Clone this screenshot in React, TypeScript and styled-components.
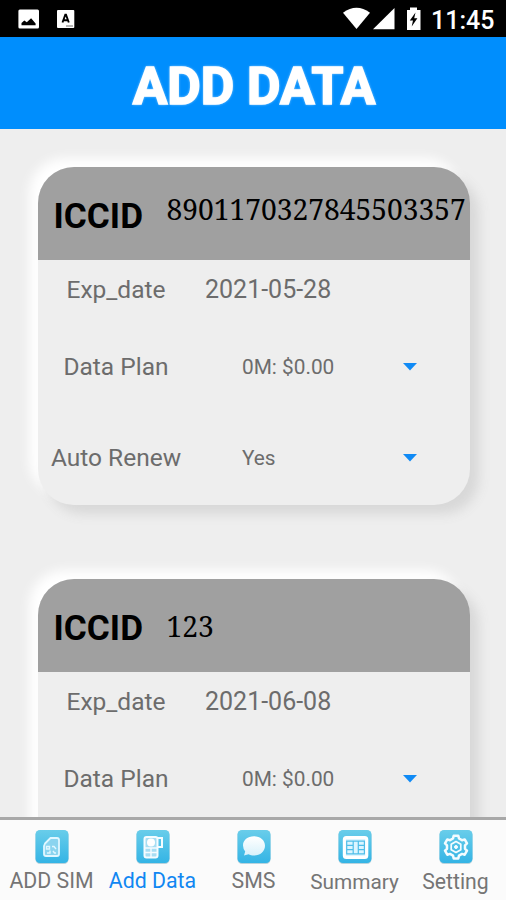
import React from "react";
import styled, { createGlobalStyle } from "styled-components";

const GlobalStyle = createGlobalStyle`
  * { box-sizing: border-box; }
  body { margin: 0; background: #eee; font-family: Roboto, sans-serif; }
`;

const Screen = styled.div`
  width: 506px;
  height: 900px;
  display: flex;
  flex-direction: column;
  overflow: hidden;
  background: #eeeeee;
`;

const StatusBar = styled.div`
  height: 37px;
  flex: none;
  display: flex;
  align-items: center;
  justify-content: space-between;
  background: #000;
  color: #fff;
`;

const StatusIcons = styled.svg`
  display: block;
  flex: none;
`;

const StatusRight = styled.div`
  display: flex;
  align-items: center;
  width: 168px;
`;

const Clock = styled.span`
  font-size: 25px;
  font-weight: 500;
  line-height: 30px;
  margin: 4px 0 0 5px;
  white-space: nowrap;
`;

const Header = styled.header`
  height: 92px;
  flex: none;
  display: flex;
  align-items: center;
  justify-content: center;
  background: #008efd;
`;

const Title = styled.h1`
  margin: 7px 0 0 2px;
  color: #fff;
  font-size: 51.5px;
  font-weight: 700;
  line-height: 60px;
  white-space: nowrap;
  -webkit-text-stroke: 1.6px #fff;
  text-shadow: 0 0 3px #fff;
`;

const Content = styled.main`
  flex: 1;
  min-height: 0;
  overflow: hidden;
  display: flex;
  flex-direction: column;
  gap: 74px;
  padding: 38px 36px 0 38px;
`;

const Card = styled.section`
  height: 338px;
  flex: none;
  border-radius: 36px;
  background: #eeeeee;
  box-shadow: 9px 9px 12px #d8d8d8, -9px -9px 12px #ffffff;
`;

const CardHead = styled.div`
  height: 93px;
  display: flex;
  align-items: flex-start;
  border-radius: 36px 36px 0 0;
  background: #a0a0a0;
  color: #000;
`;

const CardTitle = styled.h2`
  width: 113px;
  margin: 0;
  padding: 28px 0 0 15.5px;
  font-size: 35.2px;
  line-height: 42px;
  font-weight: 700;
`;

const Iccid = styled.span<{ $drop: number }>`
  padding: ${(p) => p.$drop}px 0 0 15.5px;
  font-family: "Noto Serif", "DejaVu Serif Condensed", "DejaVu Serif", serif;
  font-stretch: condensed;
  font-size: 28.2px;
  line-height: 34px;
  white-space: nowrap;
`;

const Row = styled.div<{ $height: number }>`
  height: ${(p) => p.$height}px;
  display: flex;
  align-items: center;
  color: #6c6c6c;
`;

const Label = styled.span`
  width: 156px;
  text-align: center;
  font-size: 24.5px;
  line-height: 30px;
  white-space: nowrap;
`;

const DateText = styled.span`
  margin-left: 11px;
  font-size: 25px;
  line-height: 30px;
  white-space: nowrap;
`;

const Select = styled.div`
  margin-left: 48px;
  width: 176px;
  display: flex;
  align-items: center;
  justify-content: space-between;
  font-size: 20.8px;
  line-height: 28px;
  white-space: nowrap;
`;

const Caret = styled.svg`
  display: block;
  flex: none;
`;

const Nav = styled.nav`
  height: 83px;
  flex: none;
  display: grid;
  grid-template-columns: repeat(5, 101px);
  padding-left: 1px;
  border-top: 3px solid #a8a8a8;
  background: #fbfbfb;
`;

const Tab = styled.div<{ $active?: boolean }>`
  display: flex;
  flex-direction: column;
  align-items: center;
  padding-top: 9px;
  color: ${(p) => (p.$active ? "#1187f2" : "#757575")};
`;

const TabIcon = styled.svg`
  display: block;
  flex: none;
`;

const TabLabel = styled.span<{ $size: number; $gap: number }>`
  margin-top: ${(p) => p.$gap}px;
  font-size: ${(p) => p.$size}px;
  line-height: 26px;
  white-space: nowrap;
`;

function CaretIcon() {
  return (
    <Caret width="16" height="10" viewBox="0 0 16 10">
      <path d="M1 1h14L8 8.6z" fill="#108af5" />
    </Caret>
  );
}

interface Sim {
  iccid: string;
  drop: number;
  date: string;
}

const sims: Sim[] = [
  { iccid: "8901170327845503357", drop: 25, date: "2021-05-28" },
  { iccid: "123", drop: 30, date: "2021-06-08" },
];

function SimCard({ sim }: { sim: Sim }) {
  return (
    <Card>
      <CardHead>
        <CardTitle>ICCID</CardTitle>
        <Iccid $drop={sim.drop}>{sim.iccid}</Iccid>
      </CardHead>
      <Row $height={60}>
        <Label>Exp_date</Label>
        <DateText>{sim.date}</DateText>
      </Row>
      <Row $height={94}>
        <Label>Data Plan</Label>
        <Select>
          0M: $0.00
          <CaretIcon />
        </Select>
      </Row>
      <Row $height={88}>
        <Label>Auto Renew</Label>
        <Select>
          Yes
          <CaretIcon />
        </Select>
      </Row>
    </Card>
  );
}

interface TabItem {
  name: string;
  size: number;
  gap: number;
  glyph: React.ReactNode;
}

const tabs: TabItem[] = [
  {
    name: "ADD SIM",
    size: 21.3,
    gap: 3,
    glyph: (
      <g>
        <path d="M11 14.5 16.500 9h6.500a2 2 0 0 1 2 2v14a2 2 0 0 1-2 2H12a2 2 0 0 1-2-2v-8z" fill="#8bd4ef" stroke="#e1f7ff" strokeWidth="1.8" strokeLinejoin="round" />
        <path d="M12.500 17.500h3v2.500h-3zM18 17.500h2l2 2.500M13 24h3v-2.500M19 22l1.500 2H22" fill="none" stroke="#e1f7ff" strokeWidth="1.400" />
      </g>
    ),
  },
  {
    name: "Add Data",
    size: 21.3,
    gap: 3,
    glyph: (
      <g fill="none" stroke="#f5fcff" strokeWidth="2">
        <rect x="9.500" y="8" width="13" height="20.500" rx="2" fill="#a8def3" />
        <path d="M22.500 9h4.500v9h-4.500" />
        <path d="M10 19h12M10 23.500h12M16 19v9" strokeWidth="1.400" />
        <circle cx="16" cy="13.500" r="4" fill="#fff" stroke="none" />
      </g>
    ),
  },
  {
    name: "SMS",
    size: 21.3,
    gap: 3,
    glyph: (
      <path d="M18 7.300c6.300 0 11 4 11 9.500s-4.700 9.800-11 9.800c-2 0-4-.5-5.500-1.300L8 26.600l1.200-4.200a9.500 9.500 0 0 1-2.200-5.900c0-5.300 4.700-9.200 11-9.200z" fill="url(#bubble)" />
    ),
  },
  {
    name: "Summary",
    size: 20.8,
    gap: 4,
    glyph: (
      <g>
        <rect x="7.300" y="8.500" width="22.500" height="20" rx="2" fill="#dcf5ff" stroke="#fff" strokeWidth="3" />
        <path d="M9.700 12.200h17.700v12.600H9.700zM10 16.400h6M10 20.600h6M21.500 16.400h6M21.500 20.600h6M16.200 12v13M21.300 12v13" fill="none" stroke="#4fbee9" strokeWidth="1.200" />
      </g>
    ),
  },
  {
    name: "Setting",
    size: 21.2,
    gap: 4,
    glyph: (
      <g fill="none" stroke="#f4fcff" strokeLinejoin="round">
        <path d="m15.700 6.700-.7 2.700-3 1.800-2.700-.8-2.300 4 2 1.900v3.500l-2 1.900 2.300 4 2.700-.8 3 1.700.7 2.800h4.600l.7-2.800 3-1.700 2.700.8 2.300-4-2-1.900v-3.500l2-1.900-2.300-4-2.700.8-3-1.800-.7-2.700z" strokeWidth="2.500" />
        <path d="m18 12.500 4.800 2.700v5.500L18 23.500l-4.800-2.800v-5.500z" strokeWidth="1.700" />
        <circle cx="18" cy="18" r="1.500" fill="#f4fcff" strokeWidth="1" />
      </g>
    ),
  },
];

export default function App() {
  return (
    <>
      <GlobalStyle />
      <Screen>
        <StatusBar>
          <StatusIcons width="90" height="37" viewBox="0 0 90 37">
            <rect x="18.400" y="9.500" width="20.600" height="19" rx="1.500" fill="#fff" />
            <path d="M21.500 25.200v-2.200l2.800-2.500 2.500 1.700 4.300-4 4.500 5.200v1.800z" fill="#000" />
            <rect x="57" y="10" width="17.300" height="18" rx="1" fill="#fff" />
            <path d="m62.500 22.500 2.800-7.800h.7l2.800 7.800M63.500 20.200h4.700" fill="none" stroke="#000" strokeWidth="1.900" />
            <path d="M66 26h7" stroke="#888" strokeWidth="1.200" />
          </StatusIcons>
          <StatusRight>
            <StatusIcons width="88" height="37" viewBox="338 0 88 37">
              <path d="M343 12.800Q356.500 2.700 370 12.800L356.500 29z" fill="#fff" />
              <path d="M394.500 8v21.200h-21.500z" fill="#fff" />
              <path d="M407 10h3V7.500h7V10h3.500v20H407z" fill="#fff" />
              <path d="m415.500 12.500-5.700 8h3.200l-1.300 6 5.700-8.200h-3.200z" fill="#000" />
            </StatusIcons>
            <Clock>11:45</Clock>
          </StatusRight>
        </StatusBar>
        <Header>
          <Title>ADD DATA</Title>
        </Header>
        <Content>
          {sims.map((sim) => (
            <SimCard key={sim.iccid} sim={sim} />
          ))}
        </Content>
        <Nav>
          {tabs.map((tab) => (
            <Tab key={tab.name} $active={tab.name === "Add Data"}>
              <TabIcon width="36" height="36" viewBox="0 0 36 36">
                <defs>
                  <linearGradient id="tile" x1="0" y1="0" x2="0" y2="1">
                    <stop offset="0" stopColor="#69cdea" />
                    <stop offset="1" stopColor="#34b4e5" />
                  </linearGradient>
                  <linearGradient id="bubble" x1="0" y1="0" x2="0" y2="1">
                    <stop offset="0" stopColor="#fff" />
                    <stop offset="1" stopColor="#d8f1fb" />
                  </linearGradient>
                </defs>
                <rect x="1.500" y="1.500" width="33" height="33.500" rx="4.500" fill="#b9d3dc" />
                <rect x="1.500" y="1" width="33" height="33" rx="4.500" fill="url(#tile)" />
                {tab.glyph}
              </TabIcon>
              <TabLabel $size={tab.size} $gap={tab.gap}>{tab.name}</TabLabel>
            </Tab>
          ))}
        </Nav>
      </Screen>
    </>
  );
}
